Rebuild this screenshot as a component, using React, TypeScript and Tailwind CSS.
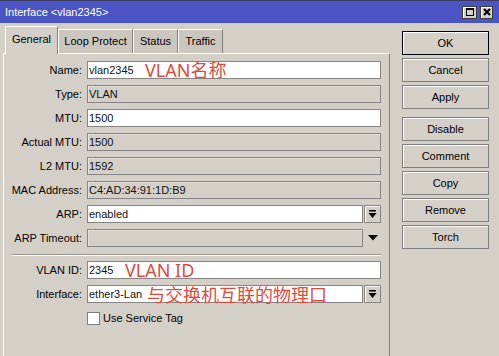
import React from "react";

const F = "[font-family:'Liberation_Sans',Arial,sans-serif]";
const CJK = "[font-family:'Noto_Sans','Noto_Sans_CJK_SC',sans-serif]";

function Field({
  value,
  ro,
  children,
}: {
  value?: string;
  ro?: boolean;
  children?: React.ReactNode;
}) {
  return (
    <div
      className={`relative h-[18px] flex-1 border border-[#858585] flex items-center pl-[1px] ${
        ro ? "bg-[#d4d0c8] shadow-[inset_1px_1px_0_#e4e1da]" : "bg-white"
      }`}
    >
      <span className="text-[11px] leading-none text-[#111]">{value}</span>
      {children}
    </div>
  );
}

function DropBtn() {
  return (
    <div className="ml-[1px] w-[17px] h-[18px] border border-[#858585] bg-[#d4d0c8] shadow-[inset_1px_1px_0_#fff] flex items-center justify-center">
      <svg width="9" height="9" viewBox="0 0 9 9">
        <rect x="1" y="0" width="7" height="1.5" fill="#000" />
        <polygon points="0.5,3 8.5,3 4.5,8" fill="#000" />
      </svg>
    </div>
  );
}

function Row({ label, children }: { label: string; children: React.ReactNode }) {
  return (
    <div className="flex items-center h-[18px]">
      <div className="w-[78px] text-right text-[11px] leading-none text-black">{label}</div>
      <div className="ml-[5px] flex flex-1 items-center">{children}</div>
    </div>
  );
}

function Btn({ label, def, className = "" }: { label: string; def?: boolean; className?: string }) {
  return (
    <div
      className={`h-[24px] w-[87px] flex items-center justify-center text-[11px] text-black bg-[#d4d0c8] border shadow-[inset_1px_1px_0_#fff] ${
        def ? "border-black" : "border-[#7e7e7e]"
      } ${className}`}
    >
      {label}
    </div>
  );
}

export default function App() {
  return (
    <div className={`w-[499px] h-[356px] overflow-hidden bg-[#d4d0c8] ${F} flex flex-col`}>
      {/* Title bar */}
      <div className="h-[23px] bg-[#4a55c3] border-t border-[#3a3a60] flex items-center pl-[5px] pr-[6px]">
        <span className="text-white text-[11px] leading-none">Interface &lt;vlan2345&gt;</span>
        <div className="ml-auto flex items-center gap-[3px]">
          <div className="w-[15px] h-[13px] bg-[#d4d0c8] border border-[#404040] shadow-[inset_1px_1px_0_#fff] flex items-center justify-center">
            <div className="w-[8px] h-[8px] border border-black border-t-2" />
          </div>
          <div className="w-[13px] h-[13px] bg-[#d4d0c8] border border-[#404040] shadow-[inset_1px_1px_0_#fff] flex items-center justify-center">
            <svg width="8" height="8" viewBox="0 0 8 8">
              <path d="M1 1 L7 7 M7 1 L1 7" stroke="#000" strokeWidth="2" />
            </svg>
          </div>
        </div>
      </div>

      {/* Body */}
      <div className="flex flex-1">
        {/* Left */}
        <div className="ml-[3px] w-[387px] flex flex-col">
          {/* Tabs */}
          <div className="h-[30px] flex items-end pl-[2px]">
            <div className="relative z-10 -mb-[1px] h-[28px] w-[53px] bg-[#d4d0c8] border-t border-l border-white border-r border-r-[#808080] flex items-center justify-center text-[11px] pb-[3px]">
              General
            </div>
            <div className="h-[24px] w-[75px] bg-[#cbc7bf] border-t border-l border-white border-r border-r-[#808080] flex items-center justify-center text-[11px]">
              Loop Protect
            </div>
            <div className="h-[24px] w-[45px] bg-[#cbc7bf] border-t border-l border-white border-r border-r-[#808080] flex items-center justify-center text-[11px]">
              Status
            </div>
            <div className="h-[24px] w-[45px] bg-[#cbc7bf] border-t border-l border-white border-r border-r-[#808080] flex items-center justify-center text-[11px]">
              Traffic
            </div>
          </div>

          {/* Panel */}
          <div className="flex-1 border-t border-l border-white border-r border-r-[#808080] pr-[8px] pt-[7px] flex flex-col">
            <div className="flex flex-col gap-[6px]">
              <Row label="Name:">
                <Field value="vlan2345">
                  <span className={`absolute left-[57px] top-[-3px] text-[18px] leading-[22px] text-[#e04a3c] ${CJK}`}>
                    VLAN名称
                  </span>
                </Field>
              </Row>
              <Row label="Type:">
                <Field value="VLAN" ro />
              </Row>
              <Row label="MTU:">
                <Field value="1500" />
              </Row>
              <Row label="Actual MTU:">
                <Field value="1500" ro />
              </Row>
              <Row label="L2 MTU:">
                <Field value="1592" ro />
              </Row>
              <Row label="MAC Address:">
                <Field value="C4:AD:34:91:1D:B9" ro />
              </Row>
              <Row label="ARP:">
                <Field value="enabled" />
                <DropBtn />
              </Row>
              <Row label="ARP Timeout:">
                <Field ro />
                <div className="ml-[1px] w-[17px] h-[18px] flex items-center justify-center">
                  <svg width="10" height="6" viewBox="0 0 10 6">
                    <polygon points="0,0 10,0 5,5.5" fill="#000" />
                  </svg>
                </div>
              </Row>
            </div>

            <div className="mt-[7px] ml-[8px] h-[2px] border-t border-[#9a968f] border-b border-b-white" />

            <div className="mt-[5px] flex flex-col gap-[6px]">
              <Row label="VLAN ID:">
                <Field value="2345">
                  <span className={`absolute left-[37px] top-[-3px] text-[18px] leading-[22px] text-[#e04a3c] ${CJK}`}>
                    VLAN ID
                  </span>
                </Field>
              </Row>
              <Row label="Interface:">
                <Field value="ether3-Lan">
                  <span className={`absolute left-[59px] top-[-2px] text-[18px] leading-[22px] text-[#e04a3c] whitespace-nowrap ${CJK}`}>
                    与交换机互联的物理口
                  </span>
                </Field>
                <DropBtn />
              </Row>
            </div>

            <div className="mt-[9px] ml-[83px] flex items-center">
              <div className="w-[13px] h-[13px] bg-white border border-[#7e7e7e]" />
              <span className="ml-[3px] text-[11px] leading-none">Use Service Tag</span>
            </div>
          </div>
        </div>

        {/* Right buttons */}
        <div className="ml-[12px] pt-[8px] flex flex-col gap-[3px]">
          <Btn label="OK" def />
          <Btn label="Cancel" />
          <Btn label="Apply" />
          <Btn label="Disable" className="mt-[5px]" />
          <Btn label="Comment" />
          <Btn label="Copy" />
          <Btn label="Remove" />
          <Btn label="Torch" />
        </div>
      </div>
    </div>
  );
}
